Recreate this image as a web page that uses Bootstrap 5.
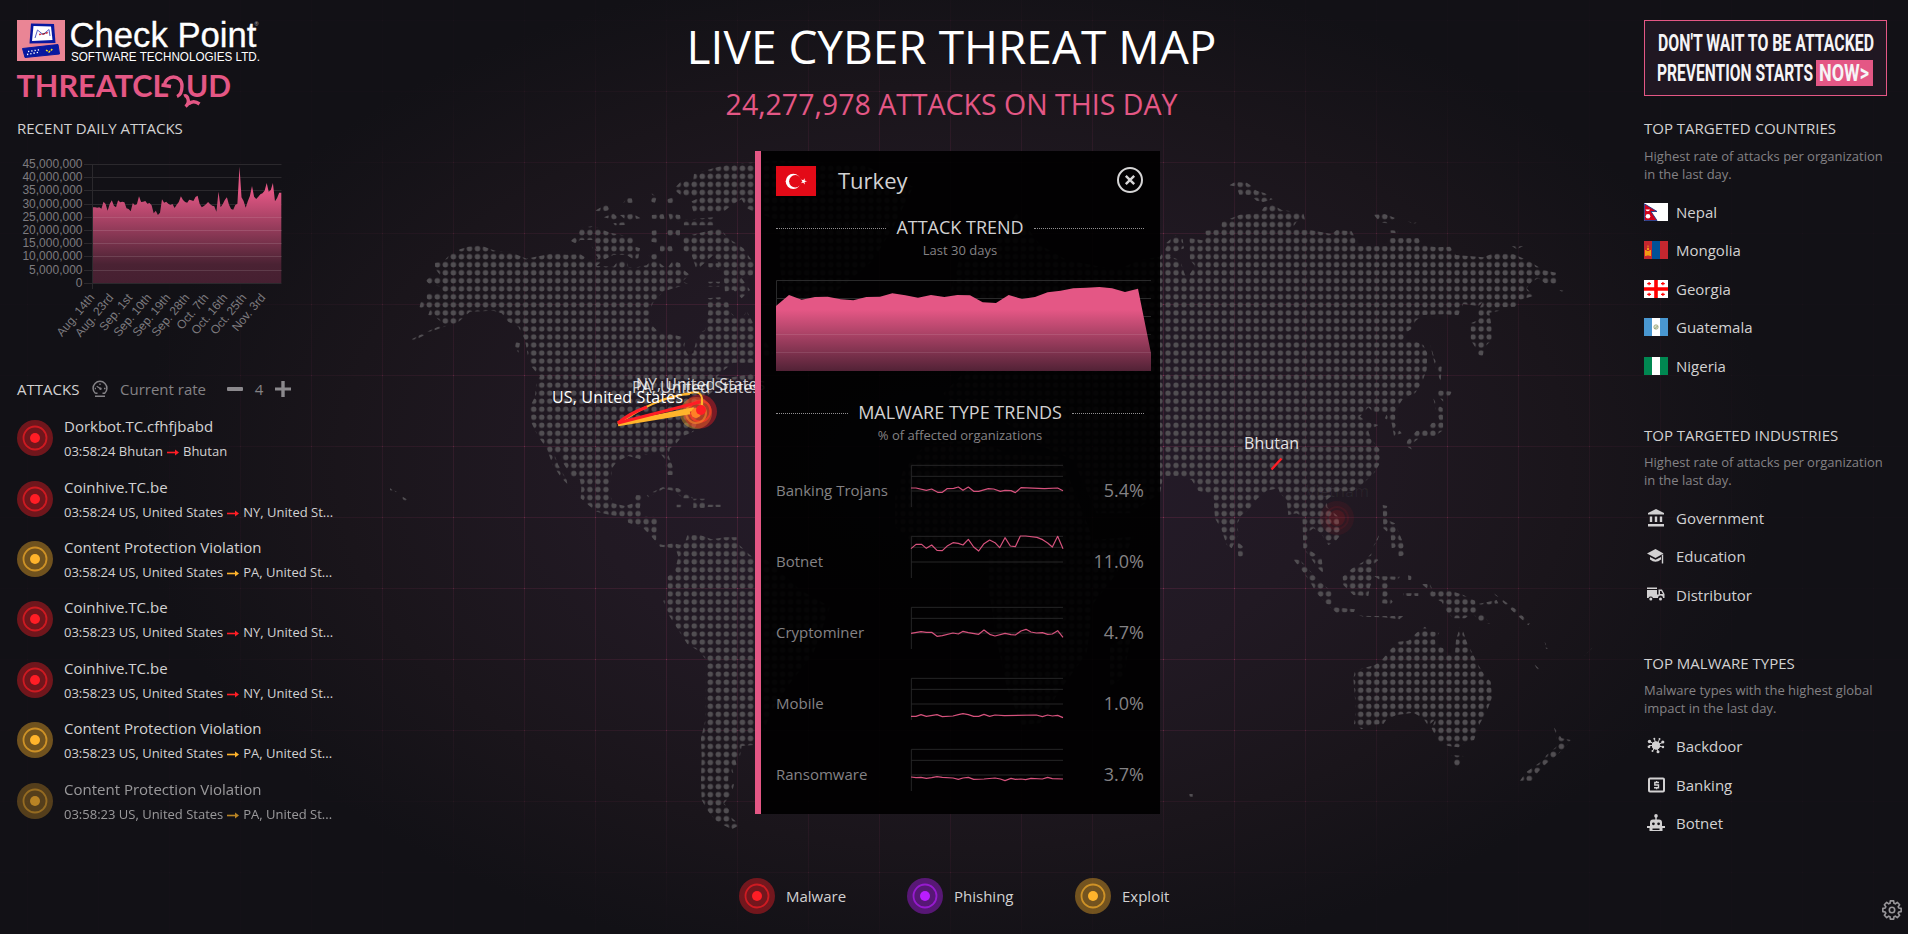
<!DOCTYPE html>
<html lang="en">
<head>
<meta charset="utf-8">
<meta name="viewport" content="width=device-width, initial-scale=1">
<title>Live Cyber Threat Map</title>
<link href="https://cdn.jsdelivr.net/npm/bootstrap@5.3.0/dist/css/bootstrap.min.css" rel="stylesheet">
<style>
:root{--pink:#e45785;--soft:#d2d1d2;--dim:#848285;--malware:#ff1d25;--phishing:#b91dff;--exploit:#ffb42b}
html,body{height:100%}
body{margin:0;overflow:hidden;background:#121116;color:var(--soft);font-family:"Open Sans","Noto Sans",sans-serif;font-size:15px;line-height:20px}
.world{position:absolute;inset:0;width:1908px;height:934px;z-index:0}
.stage{position:relative;z-index:1;width:1908px;height:934px}
.side-left{width:264px;padding:20px 0 0 17px}
.side-right{width:264px;padding-top:20px}
.side-left svg,.side-right svg{overflow:visible}
.headline{font-size:46px;line-height:56px;color:#fff;margin:18px 5px 0 0;font-weight:400;white-space:nowrap}
.counter{font-size:28.5px;line-height:36px;color:var(--pink);margin:12px 5px 0 0;white-space:nowrap}
.sect{font-size:15px;line-height:20px;font-weight:400;margin:0;white-space:nowrap}
.dim{color:var(--dim)}
.desc{font-size:13px;line-height:17.8px;color:var(--dim);margin:9px 0 0;white-space:nowrap}
.toplist{margin:9px 0 0}
.toplist li{height:38.5px;gap:8px}
.toplist svg{width:24px;height:18px;flex:none}
.atk{height:60.4px;gap:11px}
.atk .sub{font-size:13px;line-height:18px;margin-top:6px}
.atk .arr{width:12px;height:7px;margin:0 4px}
.faded{opacity:.7}
.t-m{color:var(--malware)}.t-p{color:var(--phishing)}.t-e{color:var(--exploit)}
.ping{width:36px;height:36px;flex:none}
.legend-row{height:36px;margin-bottom:20px;gap:0}
.legend-row>div{width:168px;gap:11px}
.panel{position:absolute;z-index:2;left:755px;top:151px;width:405px;height:663px;background:rgba(0,0,0,.93);border-left:6px solid var(--pink);padding:15px 16px 0 15px}
.ruled{gap:10px;font-size:18px;line-height:24px;white-space:nowrap}
.ruled::before,.ruled::after{content:"";flex:1;border-top:1px dotted #918f91;margin-top:2px}
.small-note{font-size:13px;line-height:18px;color:var(--dim);text-align:center}
.trend{height:71px}
.trend>span:first-child{width:135px;white-space:nowrap}
.trend .pct{font-size:18px;flex:1;text-align:right}
.trend svg{overflow:visible;width:152px;height:42px;margin-top:-8px}
.gear{position:absolute;left:1881px;top:899px;width:22px;height:22px}
svg text{white-space:pre}
</style>
</head>
<body>
<svg class="world" viewBox="0 0 1908 934" aria-hidden="true">
  <defs>
    <radialGradient id="glow" gradientUnits="userSpaceOnUse" cx="954" cy="467" r="820" gradientTransform="translate(954 467) scale(1 .62) translate(-954 -467)">
      <stop offset="0" stop-color="#261c2c"/><stop offset=".45" stop-color="#211923"/><stop offset=".75" stop-color="#1a151b"/><stop offset="1" stop-color="#121116"/>
    </radialGradient>
    <radialGradient id="fade" gradientUnits="userSpaceOnUse" cx="954" cy="467" r="800" gradientTransform="translate(954 467) scale(1 .6) translate(-954 -467)">
      <stop offset="0" stop-color="#fff" stop-opacity=".9"/><stop offset=".55" stop-color="#fff" stop-opacity=".6"/><stop offset="1" stop-color="#fff" stop-opacity=".05"/>
    </radialGradient>
    <mask id="gm"><rect width="1908" height="934" fill="url(#fade)"/></mask>
    <pattern id="lines" patternUnits="userSpaceOnUse" x="382" y="162" width="71" height="71"><path d="M.5 0V71M0 .5H71" stroke="#7a2f52" stroke-opacity=".42" fill="none"/><rect width="1" height="1" fill="#d0487a" fill-opacity=".6"/></pattern>
    <pattern id="dots" patternUnits="userSpaceOnUse" x="425.3" y="164.35" width="8.029" height="8.029"><circle cx="4.015" cy="4.015" r="2.7" fill="#514e52"/></pattern>
    <clipPath id="land">
      <!-- North and Central America -->
      <path transform="translate(380 140) scale(.33333)" d="M118 505L123 484L140 490L140 460L165 460L180 458L185 440L150 434L138 422L150 410L170 412L180 405L165 385L165 368L190 365L208 345L240 328L265 320L300 316L345 332L400 340L440 356L460 352L520 340L560 344L600 342L630 362L655 355L645 340L635 318L650 330L640 300L600 300L590 312L572 303L596 282L600 265L640 258L690 278L760 292L760 318L780 325L775 355L760 358L740 345L700 345L670 360L650 378L700 380L715 362L740 362L745 382L770 382L800 376L815 360L806 345L830 340L834 365L850 378L862 385L880 360L900 370L905 385L930 405L905 425L930 432L880 445L850 455L835 470L818 490L806 530L820 560L835 575L870 582L905 590L915 605L912 625L925 645L940 640L948 605L958 580L975 570L978 545L985 515L982 475L1020 472L1045 488L1050 515L1065 530L1090 530L1100 512L1125 560L1180 640L1125 668L1060 668L1035 688L1010 712L1040 715L1125 700L1125 720L1060 730L1010 745L985 765L975 800L955 840L940 875L905 890L885 915L870 925L865 945L880 985L878 1005L864 1005L856 985L855 958L840 940L790 945L780 958L745 948L710 965L696 985L694 1010L688 1060L700 1090L735 1098L760 1090L768 1065L788 1065L780 1100L785 1130L815 1128L832 1135L828 1210L850 1215L880 1210L905 1215L890 1225L840 1220L815 1190L790 1165L745 1148L740 1132L690 1125L650 1115L625 1095L602 1075L604 1045L600 1020L575 1010L550 970L545 945L520 935L535 975L560 1020L562 1032L545 1015L518 975L500 925L475 890L455 850L450 800L465 770L470 720L480 710L455 680L445 655L435 600L415 560L385 545L365 520L340 512L270 515L225 555L195 555L165 530L145 525L150 510Z"/>
      <path transform="translate(380 140) scale(.33333)" d="M95 598L130 580L175 560L225 535L215 552L160 572L100 602ZM408 605L420 610L415 638L405 620Z"/>
      <!-- Arctic islands -->
      <path transform="translate(380 140) scale(.33333)" d="M645 212L680 192L690 210L665 216ZM672 232L700 220L715 235L700 240ZM740 175L755 175L760 190L730 188ZM720 225L760 222L782 235L740 242ZM815 160L830 172L825 188L810 185ZM862 178L880 172L880 190L862 190ZM815 225L850 222L855 238L815 236ZM700 250L740 246L735 255L705 256ZM865 220L900 225L905 245L870 240ZM815 272L830 270L832 308L812 305ZM840 315L875 318L880 335L840 336ZM910 240L1000 232L1000 256L912 256ZM862 270L900 270L900 292L862 288ZM910 290L1020 265L1045 295L1090 325L1125 375L1118 405L1085 415L1110 450L1085 475L1060 450L1035 455L1030 395L1000 345L950 390L935 345L910 330ZM815 342L832 345L828 360L815 355ZM985 425L1020 425L1018 440L985 440ZM985 370L1020 370L1018 390L985 388Z"/>
      <!-- Greenland -->
      <path transform="translate(380 140) scale(.33333)" d="M888 140L905 122L940 118L942 102L1000 85L1050 72L1200 62L1450 75L1600 140L1540 260L1480 360L1350 470L1260 620L1220 520L1200 380L1190 240L1125 216L1100 205L1085 178L1060 192L1030 215L940 215L932 185L965 170L905 168L890 155Z"/>
      <!-- Caribbean -->
      <path transform="translate(380 140) scale(.33333)" d="M800 1065L850 1040L895 1045L940 1075L910 1075L880 1052L850 1046L805 1072ZM890 1094H905V1102H890ZM940 1076H975V1104H940ZM985 1094L1022 1094V1101H980ZM30 1045L50 1055L48 1058L30 1050ZM68 1070L80 1078L76 1084L66 1076Z"/>
      <!-- South America -->
      <path transform="translate(600 480) scale(.33333)" d="M225 200L255 188L262 165L300 165L335 178L375 172L410 172L412 190L450 225L462 235L500 240L600 330L690 380L640 520L570 610L510 700L490 760L460 795L425 798L420 828L405 835L410 855L395 860L400 880L385 890L385 905L402 912L398 930L385 955L372 970L388 990L385 1005L420 1035L395 1048L370 1035L345 1020L322 990L305 960L303 900L305 830L303 775L316 720L318 540L300 515L262 492L235 450L200 395L190 362L203 355L203 290L225 270L235 230Z"/>
      <!-- Eurasia -->
      <path transform="translate(1150 160) scale(.33333)" d="M-570 290L-480 270L-400 160L-330 255L-250 300L-100 330L-30 300L30 290L50 260L48 250L75 226L98 238L102 265L75 275L60 290L90 300L105 345L118 345L135 318L120 300L118 234L165 242L166 212L212 208L216 186L270 164L330 160L342 142L368 134L395 150L460 158L465 180L440 185L425 208L480 210L545 222L560 210L605 214L616 235L618 258L655 258L715 258L720 234L805 234L815 255L860 262L900 260L918 285L1000 292L1030 280L1090 282L1140 305L1180 330L1218 338L1220 372L1185 370L1165 355L1145 365L1130 385L1150 408L1110 420L1095 440L1010 445L1050 452L1018 458L1025 500L1025 540L1005 560L998 588L985 585L975 560L962 540L962 490L985 480L985 450L1000 425L985 438L940 432L925 466L880 463L820 465L797 482L783 508L765 520L765 542L800 546L820 555L832 580L830 630L815 670L795 700L760 715L740 745L735 765L740 800L755 820L732 828L725 790L705 775L712 757L670 757L655 742L630 770L650 785L685 795L655 812L662 835L690 870L690 910L672 940L640 970L610 992L560 995L530 1020L532 1042L565 1070L572 1125L555 1145L535 1155L512 1118L490 1105L472 1118L478 1170L490 1178L515 1195L520 1240L500 1220L480 1190L460 1165L457 1070L440 1060L415 1065L410 1020L390 1000L385 985L350 992L320 1018L300 1045L272 1068L263 1090L265 1125L245 1165L230 1155L215 1110L195 1075L190 1005L145 992L125 960L95 948L40 948L30 1000L-60 1060L-160 1060L-230 900L-320 860L-430 790L-560 790L-620 700L-520 600L-560 520L-600 400Z"/>
      <path transform="translate(1150 160) scale(.33333)" d="M238 76L255 66L290 68L305 78L320 92L345 100L368 118L340 126L320 122L300 105L268 104L260 80ZM672 164L705 162L735 174L715 190L690 188ZM720 210L745 212L742 220L722 218ZM770 182L800 188L790 192ZM1085 258L1120 258L1100 268ZM1228 390L1240 392L1238 398ZM840 552L855 600L875 620L872 665L856 620ZM864 690L905 695L900 706L880 712L880 725L864 708ZM850 715L858 730L878 745L880 810L855 828L815 828L790 848L788 870L768 858L772 842L800 812L830 808L845 790L868 780L858 750ZM262 1145L280 1160V1190H265Z"/>
      <!-- Southeast Asia -->
      <path transform="translate(1150 480) scale(.33333)" d="M430 238L450 240L478 270L505 300L545 335L545 375L530 372L500 340L480 305L455 270ZM535 378L575 384L615 388L612 396L560 398ZM625 405L660 408L760 408L748 418L700 412L640 410ZM578 290L605 266L640 245L665 220L685 240L668 255L672 290L660 320L655 348L610 345L580 315ZM672 288L750 290L742 300L714 298L714 345L728 365L722 372L695 370L698 330L690 300ZM698 75L712 78L712 120L735 130L760 190L765 225L745 230L745 200L725 205L722 165L700 145ZM660 215L690 160L682 182ZM774 285L785 288V300H775ZM760 340L805 340V348H760ZM815 312L840 312L850 335L895 330L940 345L975 362L982 395L1000 405L1020 432L990 425L968 400L945 415L910 415L892 398L875 365L840 350L830 325ZM985 372L1040 360L1045 370L990 378ZM1025 335L1100 390L1140 430L1135 436L1090 395ZM1184 485L1194 506H1188ZM1152 552L1180 578L1165 572ZM1302 528L1328 502L1315 518ZM112 942H128V950H115Z"/>
      <!-- Australia, Tasmania and New Zealand -->
      <path transform="translate(1150 480) scale(.33333)" d="M610 595L615 572L650 562L675 555L700 535L720 510L745 485L775 482L800 458L825 440L835 452L868 458L855 480L858 495L880 505L895 525L915 520L918 480L930 440L940 455L950 485L965 515L985 555L1000 580L1022 605L1027 650L1010 695L990 730L972 780L950 785L925 802L895 798L865 785L845 745L858 715L835 738L820 715L790 698L740 705L710 718L700 732L660 735L635 748L612 732L618 690ZM905 825L940 828L928 855L915 865ZM1212 742L1235 775L1262 780L1240 808L1215 830L1190 850L1165 875L1145 902L1110 902L1130 875L1180 840L1190 825L1225 795Z"/>
      <!-- Africa -->
      <path transform="translate(740 400) scale(.33333)" d="M560 130L720 120L800 160L960 170L1010 290L1060 420L1180 410L1130 520L1060 610L1040 760L960 870L900 970L845 975L800 860L770 720L745 560L745 430L520 430L465 380L465 290L490 210ZM1110 740L1175 700L1150 830L1110 860Z"/>
    </clipPath>
  </defs>
  <rect width="1908" height="934" fill="#121116"/>
  <rect width="1908" height="934" fill="url(#glow)"/>
  <rect width="1908" height="934" fill="url(#lines)" mask="url(#gm)"/>
  <g clip-path="url(#land)"><rect x="380" y="140" width="1220" height="720" fill="url(#dots)"/></g>
  <!-- live attacks -->
  <g fill="none" stroke-linecap="butt">
    <circle cx="696" cy="413" r="16" fill="#ffb42b" fill-opacity=".38"/>
    <circle cx="700" cy="411.500" r="17" fill="#ff1d25" fill-opacity=".4"/>
    <circle cx="700" cy="411" r="10.500" stroke="#ff3a28" stroke-width="2" stroke-opacity=".75"/>
    <circle cx="696" cy="413" r="10" stroke="#ff8a28" stroke-width="2" stroke-opacity=".6"/>
    <path d="M618 424Q650 400 690 393Q702 390 702 400V409M618 424Q660 395 690 394" stroke="#ffb42b" stroke-width="2"/>
    <path d="M618 424.500L690 412.500M618 424L694 409" stroke="#ffb42b" stroke-width="3.500"/>
    <path d="M618 423L700 402" stroke="#ff1d25" stroke-width="3"/>
    <path d="M618 423Q630 413 647 407" stroke="#ff1d25" stroke-width="3.200"/>
    <circle cx="696" cy="413" r="5" fill="#ff8026"/><circle cx="701" cy="410" r="5" fill="#ff1d25"/>
    <path d="M1271.500 469.500L1281.500 458.500" stroke="#ff1d25" stroke-width="2.400"/>
    <g fill="#ff1d25"><circle cx="1337" cy="518" r="17" fill-opacity=".07"/><circle cx="1337" cy="518" r="8" fill-opacity=".12"/><circle cx="1337" cy="518" r="11" fill="none" stroke="#ff1d25" stroke-opacity=".08" stroke-width="2"/></g>
  </g>
  <g font-family="Open Sans, Noto Sans, sans-serif" font-size="16" fill="#fff">
    <text x="636" y="390" textLength="129" fill-opacity=".8">NY, United States</text>
    <text x="632" y="393" textLength="128" fill-opacity=".8">PA, United States</text>
    <text x="552" y="403" textLength="131">US, United States</text>
    <text x="1244" y="449" textLength="55" fill-opacity=".88">Bhutan</text>
    <text x="1306" y="497" textLength="63" fill-opacity=".06">Vietnam</text>
  </g>
</svg>

<svg class="d-none">
  <symbol id="ping" viewBox="0 0 36 36"><circle cx="18" cy="18" r="18" fill="currentColor" fill-opacity=".4"/><circle cx="18" cy="18" r="11.500" fill="none" stroke="currentColor" stroke-width="1.800" stroke-opacity=".65"/><circle cx="18" cy="18" r="5" fill="currentColor"/></symbol>
  <symbol id="arr" viewBox="0 0 12 7"><path d="M0 3.500H9" stroke="currentColor" stroke-width="1.600"/><path d="M8 .5L12 3.500L8 6.500Z" fill="currentColor"/></symbol>
</svg>

<div class="stage d-flex justify-content-between">
  <aside class="side-left d-flex flex-column flex-shrink-0">
    <svg width="245" height="90" viewBox="17 20 245 90" role="img" aria-label="Check Point ThreatCloud">
      <rect x="17" y="20" width="48" height="41" fill="#ea8595"/>
      <path d="M31 23.500L54 24L55.500 43L29.500 43.500Z" fill="#0818a0"/><path d="M33.500 26L51 26.500L52.500 40L32 41Z" fill="#fff"/>
      <path d="M22.500 48.500L58 44.500L59.500 54L25 57.500Z" fill="#0818a0" stroke="#0818a0" stroke-linejoin="round"/>
      <path d="M28 51.500L41 49.500M27 54.500L40 52" stroke="#fff" stroke-width="1.300" stroke-dasharray="1.300 2"/><path d="M46 50L49 52L53 48.500" stroke="#ffe21a" stroke-width="1.400" stroke-dasharray="2 1" fill="none"/>
      <path d="M35 38L37.500 30L43 34.500L49 29.500L50 36" stroke="#5a62c8" fill="none"/><path d="M39 34.500L44 34L49 32" stroke="#d93550" stroke-width="1.500" stroke-dasharray="2 1.500"/>
      <g fill="#fff" font-family="Liberation Sans, Arial, sans-serif">
        <text x="69.500" y="46.500" font-size="35" textLength="187" lengthAdjust="spacingAndGlyphs" stroke="#fff" stroke-width=".3">Check Point</text>
        <text x="254.500" y="26" font-size="5.500" fill="#bbb">®</text>
        <text x="71" y="61" font-size="12" textLength="189" lengthAdjust="spacingAndGlyphs">SOFTWARE TECHNOLOGIES LTD.</text>
      </g>
      <g fill="#e45785" font-family="Lato, sans-serif" font-weight="700" font-size="29.500">
        <text x="16.500" y="97" textLength="152" lengthAdjust="spacingAndGlyphs">THREATCL</text>
        <text x="186" y="97" textLength="45" lengthAdjust="spacingAndGlyphs">UD</text>
      </g>
      <path d="M164.500 86C165 74 182 74 182 86C182 92 179.500 95.500 177 96.500M161.500 85L171 86.500M184 96C186 95 187.500 97 188 99C189 102 188 104.500 185.500 106.500M188.500 104C192 101 196 101.500 199.500 104" fill="none" stroke="#e45785" stroke-width="3.400"/>
    </svg>
    <h2 class="sect" style="margin-top:8px">RECENT DAILY ATTACKS</h2>
    <svg id="daily" class="flex-shrink-0" width="285" height="216" viewBox="17 142 285 216" style="margin-top:4px" font-family="Liberation Sans, Arial, sans-serif" font-size="12" fill="#7d7b7f"></svg>
    <div class="d-flex align-items-center dim text-nowrap" style="width:290px;height:24px;margin-top:19px">
      <h2 class="sect" style="width:75px;color:var(--soft)">ATTACKS</h2>
      <svg width="16" height="16" viewBox="0 0 16 16" fill="none" stroke="#858387" stroke-width="1.500"><path d="M3.300 12.300A6.900 6.900 0 1 1 12.700 12.300H10.500M3.300 12.300H5.500M3 15.200H13"/><path d="M4.700 5.200L8.700 7.700M8 2.500V4M12 7.500H13.500M2.800 7.500H4" stroke-width="1.300"/><circle cx="8.500" cy="7.700" r="1.200" fill="#858387" stroke="none"/></svg>
      <span style="margin-left:12px;width:107px">Current rate</span>
      <svg width="16" height="16" viewBox="0 0 16 16"><rect y="6" width="16" height="4" rx="1" fill="#8b898d"/></svg>
      <span class="text-center" style="width:32px">4</span>
      <svg width="16" height="16" viewBox="0 0 16 16"><path d="M0 6.500H6.300V0H9.700V6.500H16V9.500H9.700V16H6.300V9.500H0Z" fill="#8b898d"/></svg>
    </div>
    <div id="attacks" style="margin-top:7px"></div>
  </aside>

  <main class="d-flex flex-column align-items-center flex-shrink-0">
    <h1 class="headline">LIVE CYBER THREAT MAP</h1>
    <div class="counter">24,277,978 ATTACKS ON THIS DAY</div>
    <div class="legend-row d-flex mt-auto" style="margin-left:74px">
      <div class="d-flex align-items-center"><svg class="ping t-m"><use href="#ping"/></svg>Malware</div>
      <div class="d-flex align-items-center"><svg class="ping t-p"><use href="#ping"/></svg>Phishing</div>
      <div class="d-flex align-items-center"><svg class="ping t-e"><use href="#ping"/></svg>Exploit</div>
    </div>
  </main>

  <aside class="side-right flex-shrink-0">
    <svg class="d-block" width="243" height="76" viewBox="0 0 243 76">
      <rect x=".5" y=".5" width="242" height="75" fill="#201722" stroke="#e45785"/>
      <rect x="172" y="40" width="57" height="26" fill="#e45785"/>
      <g font-family="Roboto, sans-serif" font-weight="700" font-size="23" fill="#f6f4f6">
        <text x="14" y="31" textLength="216" lengthAdjust="spacingAndGlyphs">DON'T WAIT TO BE ATTACKED</text>
        <text x="13" y="61" textLength="156" lengthAdjust="spacingAndGlyphs">PREVENTION STARTS</text>
        <text x="175" y="61" textLength="50" lengthAdjust="spacingAndGlyphs">NOW&gt;</text>
      </g>
    </svg>
    <section>
      <h2 class="sect" style="margin-top:22px">TOP TARGETED COUNTRIES</h2>
      <p class="desc" style="margin-top:10px">Highest rate of attacks per organization<br>in the last day.</p>
      <ul class="list-unstyled toplist">
        <li class="d-flex align-items-center"><svg viewBox="0 0 24 18"><path fill="#fff" d="M0 0H24V18H0Z"/><path d="M.4 .8L13 8.500H7L13 17.500H.4Z" fill="#d0021b" stroke="#1c3a8c" stroke-width=".9"/><circle cx="4" cy="13.300" r="2.300" fill="#fff"/><path d="M1.500 6.500H6A2.300 2.300 0 0 1 1.500 6.500" fill="#fff"/></svg>Nepal</li>
        <li class="d-flex align-items-center"><svg viewBox="0 0 24 18"><path fill="#c4272f" d="M0 0H24V18H0Z"/><path fill="#015197" d="M8 0H16V18H8Z"/><path d="M1 9H2.500V15H1ZM5.500 9H7V15H5.500ZM2.500 10H5.500V14.500H2.500ZM3 7H5V9H3ZM3.500 4.500H4.500V6.500H3.500Z" fill="#f39c12"/></svg>Mongolia</li>
        <li class="d-flex align-items-center"><svg viewBox="0 0 24 18"><path fill="#fff" d="M0 0H24V18H0Z"/><path d="M10.200 0H13.800V18H10.200ZM0 7.200H24V10.800H0Z" fill="#f00"/><path d="M3.200 3.600H7M5.100 2V5.200M17 3.600H20.800M18.900 2V5.200M3.200 14.400H7M5.100 12.800V16M17 14.400H20.800M18.900 12.800V16" stroke="#f00" stroke-width="1.200"/></svg>Georgia</li>
        <li class="d-flex align-items-center"><svg viewBox="0 0 24 18"><path fill="#4997d0" d="M0 0H24V18H0Z"/><path fill="#fff" d="M8 0H16V18H8Z"/><circle cx="12" cy="9" r="2.200" fill="#dfe3c8" stroke="#9aa07c" stroke-width=".8"/><path d="M10.500 11L13.500 8" stroke="#6b8a56" stroke-width=".7"/></svg>Guatemala</li>
        <li class="d-flex align-items-center"><svg viewBox="0 0 24 18"><path fill="#008751" d="M0 0H24V18H0Z"/><path fill="#fff" d="M8 0H16V18H8Z"/></svg>Nigeria</li>
      </ul>
    </section>
    <section style="margin-top:40px">
      <h2 class="sect">TOP TARGETED INDUSTRIES</h2>
      <p class="desc">Highest rate of attacks per organization<br>in the last day.</p>
      <ul class="list-unstyled toplist">
        <li class="d-flex align-items-center"><svg viewBox="0 0 24 18" fill="#d2d1d2"><path d="M4 5.500V4L12 0L20 4V5.500ZM5.800 7.500H8.200V13H5.800ZM10.800 7.500H13.200V13H10.800ZM15.800 7.500H18.200V13H15.800ZM4 15H20V17.500H4Z"/></svg>Government</li>
        <li class="d-flex align-items-center"><svg viewBox="0 0 24 18" fill="#d2d1d2"><path d="M3 6.500L11.500 2L19.500 6.500L11.500 11ZM6 10L11.500 12.700L17 10V12.500Q11.500 17 6 12.500ZM17.800 8L19.200 7.300V16.500H17.800Z"/></svg>Education</li>
        <li class="d-flex align-items-center"><svg viewBox="0 0 24 18" fill="#d2d1d2"><path d="M3 1.500H13V3H3ZM3 4H13V8.500H14.500V3.500H18L20.500 8V12H19A2.500 2.500 0 0 0 14 12H9A2.500 2.500 0 0 0 4.500 12H3ZM16 5V8H19L17.300 5Z" fill-rule="evenodd"/><circle cx="6.800" cy="13" r="1.500"/><circle cx="16.500" cy="13" r="1.500"/></svg>Distributor</li>
      </ul>
    </section>
    <section style="margin-top:39px">
      <h2 class="sect">TOP MALWARE TYPES</h2>
      <p class="desc">Malware types with the highest global<br>impact in the last day.</p>
      <ul class="list-unstyled toplist">
        <li class="d-flex align-items-center"><svg viewBox="0 0 24 18" fill="#d2d1d2" stroke="#d2d1d2"><circle cx="12" cy="8.500" r="3.800"/><path d="M12 8.500L10.500 2M12 8.500L15.500 2.500M12 8.500L6 4.500M12 8.500H5M12 8.500L18.500 5.500M12 8.500L19 10M12 8.500L8.500 14M12 8.500L14 14.500" fill="none"/><g stroke="none"><circle cx="10.300" cy="1.800" r="1"/><circle cx="15.500" cy="2" r="1"/><circle cx="5.500" cy="4.500" r="1.700"/><circle cx="5" cy="9.800" r="1.400"/><circle cx="18.800" cy="5" r="1.600"/><circle cx="19" cy="10" r="1.200"/><circle cx="8.500" cy="14" r="1"/><circle cx="14" cy="14.700" r="1.500"/></g></svg>Backdoor</li>
        <li class="d-flex align-items-center"><svg viewBox="0 0 24 18"><rect x="5" y="2.500" width="15" height="13" rx="1" fill="none" stroke="#d2d1d2" stroke-width="2"/><path d="M15 6.500H10.800V9H14.500V11.700H10M12.600 5V6.500M12.600 11.700V13.200" fill="none" stroke="#d2d1d2" stroke-width="1.400"/></svg>Banking</li>
        <li class="d-flex align-items-center"><svg viewBox="0 0 24 18" fill="#d2d1d2"><path d="M11.300 3H12.700V5.500H15A3 3 0 0 1 18 8.500V12H21V14H18.500V17H5.500V14H3V12H6V8.500A3 3 0 0 1 9 5.500H11.300ZM8.500 14.500V16H15.500V14.500ZM8 9.800A1.400 1.400 0 1 0 10.800 9.800A1.400 1.400 0 1 0 8 9.800ZM13.200 9.800A1.400 1.400 0 1 0 16 9.800A1.400 1.400 0 1 0 13.200 9.800Z" fill-rule="evenodd"/><circle cx="12" cy="1.900" r="1.800"/></svg>Botnet</li>
      </ul>
    </section>
    <svg class="gear" viewBox="0 0 22 22" fill="none" stroke="#98969a" stroke-width="1.600" stroke-linejoin="round"><circle cx="11" cy="11" r="2.700"/><path id="cog"/></svg>
  </aside>

  <section class="panel">
    <header class="d-flex align-items-center" style="height:30px">
      <svg width="40" height="30" viewBox="0 0 40 30"><path fill="#e30a17" d="M0 0H40V30H0Z"/><circle cx="17.300" cy="15.300" r="7.600" fill="#fff"/><circle cx="19.300" cy="15.300" r="6.200" fill="#e30a17"/><path d="M31 15.300L25 17.200L28.700 12.200V18.500L25 13.400Z" fill="#fff"/></svg>
      <span style="font-size:22px;margin:-2px 0 0 22px">Turkey</span>
      <svg class="ms-auto" width="28" height="28" viewBox="0 0 28 28" fill="none" stroke="#d6d5d6" style="margin-top:-2px"><circle cx="14" cy="14" r="12" stroke-width="2"/><path d="M9.800 9.800L18.200 18.200M18.200 9.800L9.800 18.200" stroke-width="2.400"/></svg>
    </header>
    <div class="ruled d-flex align-items-center" style="margin-top:19px">ATTACK TREND</div>
    <div class="small-note" style="margin-top:2px">Last 30 days</div>
    <svg class="d-block" width="376" height="93" viewBox="0 0 376 93" style="margin-top:20px;overflow:visible">
      <defs><linearGradient id="fz" gradientUnits="userSpaceOnUse" x1="0" y1="510" x2="0" y2="693"><stop offset="0" stop-color="#e45785"/><stop offset="1" stop-color="#522236"/></linearGradient></defs>
      <path d="M.5 92V1.500H375M0 19.500H375M0 37.500H375" stroke="#2a2a2b" fill="none"/>
      <path transform="translate(-26 -139) scale(.33333)" fill="url(#fz)" d="M78 693V498L117 465L155 479L195 471L233 470L272 478L310 481L349 471L390 470L427 460L466 466L504 473L543 465L583 471L622 465L660 466L698 487L738 489L776 465L816 477L855 471L893 457L932 452L970 445L1010 443L1048 441L1086 445L1125 456L1164 446L1203 640V693Z"/>
      <path d="M0 55.500H375M0 73.500H375" stroke="#fff" stroke-opacity=".1"/>
    </svg>
    <div class="ruled d-flex align-items-center" style="margin-top:28px">MALWARE TYPE TRENDS</div>
    <div class="small-note" style="margin-top:2px">% of affected organizations</div>
    <div id="trends" style="margin-top:10px"></div>
  </section>
</div>

<script src="https://cdn.jsdelivr.net/npm/bootstrap@5.3.0/dist/js/bootstrap.bundle.min.js"></script>
<script>
// Recent attack feed
const feed=[
 ['m','Dorkbot.TC.cfhfjbabd','03:58:24 Bhutan','Bhutan'],
 ['m','Coinhive.TC.be','03:58:24 US, United States','NY, United St...'],
 ['e','Content Protection Violation','03:58:24 US, United States','PA, United St...'],
 ['m','Coinhive.TC.be','03:58:23 US, United States','NY, United St...'],
 ['m','Coinhive.TC.be','03:58:23 US, United States','NY, United St...'],
 ['e','Content Protection Violation','03:58:23 US, United States','PA, United St...'],
 ['e','Content Protection Violation','03:58:23 US, United States','PA, United St...']];
document.getElementById('attacks').innerHTML=feed.map((f,i)=>`<div class="atk d-flex align-items-center${i===6?' faded':''}"><svg class="ping t-${f[0]}"><use href="#ping"/></svg><div class="text-nowrap"><div>${f[1]}</div><div class="sub">${f[2]}<svg class="arr t-${f[0]}"><use href="#arr"/></svg>${f[3]}</div></div></div>`).join('');

// Malware sparklines, plotted on a 456 x 126 grid
const trends=[
 ['Banking Trojans','5.4%','0 69 15 69 46 76 62 72 80 82 94 82 108 71 128 70 142 66 156 76 172 66 188 79 203 79 232 71 248 72 268 79 282 76 300 77 313 83 330 68 400 71 440 69 456 77'],
 ['Botnet','11.0%','0 38 15 25 32 25 46 37 62 27 78 43 94 44 110 29 126 20 142 22 156 27 172 10 188 33 203 45 219 23 236 12 252 20 266 35 282 5 298 30 313 32 328 0 344 0 378 4 395 11 410 21 424 33 440 1 456 38'],
 ['Cryptominer','4.7%','0 79 30 74 46 76 62 76 78 88 94 86 126 78 142 81 156 73 172 77 203 82 219 69 236 82 252 87 282 79 300 83 313 84 330 72 345 67 360 75 376 78 394 77 410 82 424 81 440 71 456 91'],
 ['Mobile','1.0%','0 115 15 115 30 110 46 115 78 110 94 116 126 114 142 110 156 107 172 110 188 115 203 115 219 109 236 115 252 111 280 113 376 111 394 116 410 111 424 114 440 112 456 119'],
 ['Ransomware','3.7%','0 84 15 86 30 85 46 88 62 86 78 83 94 85 126 87 142 91 156 87 172 85 188 91 219 90 252 87 268 90 282 95 300 88 313 91 330 90 344 92 360 88 394 90 410 85 424 89 456 90']];
document.getElementById('trends').innerHTML=trends.map(t=>`<div class="trend d-flex align-items-center"><span class="dim">${t[0]}</span><svg viewBox="0 0 456 126"><path d="M1 126V1H456M0 34H456M0 78H456" stroke="#262627" stroke-width="3" fill="none"/><polyline points="${t[2]}" fill="none" stroke="#d6527d" stroke-width="3.600" stroke-linejoin="round"/></svg><span class="pct dim">${t[1]}</span></div>`).join('');

// Daily attack chart
const vals='622 622 623 622 626 605 612 632 612 601 617 622 601 607 605 607 625 627 634 609 616 613 589 606 605 603 611 609 616 640 632 645 638 598 608 605 611 615 612 624 614 606 589 600 606 608 599 601 603 591 587 612 622 618 613 606 613 617 619 635 575 622 613 600 592 614 627 629 615 611 500 592 603 623 604 588 558 590 597 590 583 580 572 549 575 570 549 604 594 578 578'.split(' ').map(Number);
let s='<defs><linearGradient id="dg" x1="0" y1="0" x2="0" y2="1"><stop offset="0.2" stop-color="#e45785"/><stop offset=".84" stop-color="#4a2233"/><stop offset="1" stop-color="#462031"/></linearGradient></defs>';
for(let i=0;i<10;i++){const y=Math.round(164+i*13.2)+.5;s+=`<path d="M84 ${y}H281.500" stroke="#2b292d"/><text x="82.500" y="${y+3.500}" text-anchor="end">${i<9?(45-5*i)+',000,000':'0'}</text>`}
s+=`<path d="M92.500 164V289" stroke="#2b292d"/><path fill="url(#dg)" d="M93 283V${vals.map((v,i)=>(i?'L'+(93+i*188.300/(vals.length-1)).toFixed(1)+' ':'')+(v/3).toFixed(1)).join('')}V283Z"/>`;
for(let i=5;i<9;i++)s+=`<path d="M93 ${Math.round(164+i*13.2)+.5}H281.500" stroke="#fff" stroke-opacity=".12"/>`;
s+='<path d="M93 217.500H281.500" stroke="#fff" stroke-opacity=".1"/>';
['Aug. 14th','Aug. 23rd','Sep. 1st','Sep. 10th','Sep. 19th','Sep. 28th','Oct. 7th','Oct. 16th','Oct. 25th','Nov. 3rd'].forEach((l,i)=>{s+=`<text transform="translate(${95+i*19} 298) rotate(-50)" text-anchor="end">${l}</text>`});
document.getElementById('daily').innerHTML=s;

// Settings cog outline
let c='';for(let i=0;i<8;i++){const p=(r,a)=>(11+r*Math.cos(a)).toFixed(2)+' '+(11+r*Math.sin(a)).toFixed(2),a=i*Math.PI/4;c+=(i?'L':'M')+p(7,a-.29)+'L'+p(9.3,a-.18)+'L'+p(9.3,a+.18)+'L'+p(7,a+.29)}
document.getElementById('cog').setAttribute('d',c+'Z');
</script>
</body>
</html>
